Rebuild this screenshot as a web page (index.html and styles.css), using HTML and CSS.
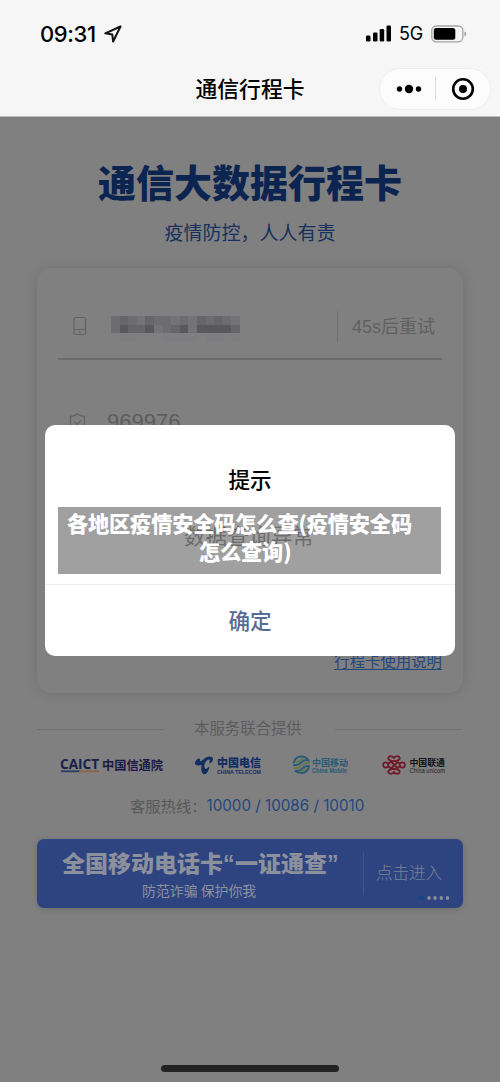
FILE: index.html
```html
<!DOCTYPE html>
<html lang="zh-CN">
<head>
<meta charset="utf-8">
<title>通信行程卡</title>
<link rel="stylesheet" href="styles.css">
</head>
<body>
<div class="phone">
  <header class="top">
    <div class="status">
      <span class="time">09:31</span>
      <svg class="loc" width="18" height="18" viewBox="0 0 18 18"><path d="M16.500 1.500 1.300 8.300l7 1.300.8 6.900z" fill="none" stroke="#111" stroke-width="2" stroke-linejoin="round"/></svg>
      <svg class="signal" width="26" height="17" viewBox="0 0 26 17"><rect x="0" y="10.500" width="4.500" height="6" rx="1.300"/><rect x="7" y="7.500" width="4.500" height="9" rx="1.300"/><rect x="13.700" y="4" width="4.500" height="12.500" rx="1.300"/><rect x="20.500" y="0.500" width="4.500" height="16" rx="1.300"/></svg>
      <span class="net">5G</span>
      <svg class="battery" width="36" height="18" viewBox="0 0 36 18"><rect x=".8" y="1" width="31" height="15.800" rx="4.500" fill="none" stroke="#a5a5a5" stroke-width="1.300"/><rect x="2.800" y="3" width="21.500" height="11.800" rx="2.500"/><path d="M33.400 6.500q2 .8 2 2.400t-2 2.400z" fill="#a5a5a5"/></svg>
    </div>
    <div class="nav">
      <h1 class="nav-title">通信行程卡</h1>
      <div class="capsule">
        <svg width="110" height="40" viewBox="0 0 110 40"><circle cx="19.500" cy="20" r="2.700"/><circle cx="29" cy="20" r="4.200"/><circle cx="38.500" cy="20" r="2.700"/><path d="M55.500 8v24" stroke="#dedede"/><circle cx="83" cy="20" r="9.800" fill="none" stroke="#000" stroke-width="2.600"/><circle cx="83" cy="20" r="4"/></svg>
      </div>
    </div>
  </header>
  <main class="page">
    <h2 class="title">通信大数据行程卡</h2>
    <p class="subtitle">疫情防控，人人有责</p>
    <section class="card">
      <div class="row phone-row">
        <svg class="ico-phone" width="14" height="20" viewBox="0 0 14 20"><rect x="1" y="1.500" width="11.500" height="17" rx="1.600" fill="none" stroke="#626265" stroke-width="1.200"/><path d="M1 13.500h11.500" stroke="#626265"/><circle cx="6.800" cy="16" r=".9" fill="#626265"/></svg>
        <svg class="mosaic" width="129" height="26" viewBox="0 0 15 3" preserveAspectRatio="none" shape-rendering="crispEdges">
          <path fill="#6d6d6f" d="M0 0h15v2H0z"/>
          <path fill="#666668" d="M1 0h1v1H1zM4 0h1v1H4zM10 0h1v1h-1zM12 0h1v1h-1zM2 1h2v1H2zM7 1h1v1H7zM14 1h1v1h-1z"/>
          <path fill="#747476" d="M3 0h1v1H3zM7 0h1v1H7zM9 0h1v2H9zM5 1h1v1H5zM14 0h1v1h-1z"/>
          <path fill="#59595b" d="M1 1h1v1H1zM4 1h1v1H4zM8 1h1v1H8zM10 1h4v1h-4z"/>
          <path fill="#7e7e80" d="M1 2h2v1H1zM6 2h4v1H6zM11 2h2v1h-2zM14 2h1v1h-1z"/>
        </svg>
        <span class="retry">45s后重试</span>
      </div>
      <div class="row code-row">
        <svg width="17" height="20" viewBox="0 0 17 20"><path d="M8.500 1q3 2.200 7 2.300V10q0 6-7 8.500Q1.500 16 1.500 10V3.300Q5.500 3.200 8.500 1z" fill="none" stroke="#626265" stroke-width="1.200"/><path d="m5.500 9 2.500 2.500 4-4" fill="none" stroke="#626265" stroke-width="1.200"/></svg>
        <span class="code">969976</span>
      </div>
      <a class="guide">行程卡使用说明</a>
    </section>
    <div class="provider"><span>本服务联合提供</span></div>
    <div class="logos">
      <svg width="104" height="24" viewBox="0 0 104 24"><text class="caict" x="0" y="15.800" textLength="39" lengthAdjust="spacingAndGlyphs">CAICT</text><path d="M1 18.300h19" stroke="#263d67" stroke-width="1.800"/><path d="M19 18.300h20" stroke="#8a654b" stroke-width="1.800"/><text class="cn navy" x="42" y="17" font-size="12.300" textLength="61" lengthAdjust="spacingAndGlyphs">中国信通院</text></svg>
      <svg width="68" height="24" viewBox="0 0 68 24"><g fill="#112e61"><path d="M.8 10.500C1.500 7.500 3 5.600 5 5.500c1.500 0 1.200 1.700.8 3 2.400-.8 4.600-3.400 7.200-4.600 2.400-1 5.600-.6 6 1.800.3 2.200-1.600 4.200-4.200 4.800 1-1.400 1.600-3.600.2-4-1.600-.3-3.600 2.200-4.400 4.600-.7 2.200-.2 4 1.200 5 1.300-.6 2.600-1.700 3.600-2.900-.3 3.600-2.200 7.600-4.600 8-2.700.2-4-3.200-3.400-7.600l.3-1.700C5.500 12.500 1.500 13 .8 10.500z"/></g><text class="cn telecom" x="23" y="14" font-size="11.300" textLength="44" lengthAdjust="spacingAndGlyphs">中国电信</text><text class="latin telecom" x="23" y="20.500" font-size="5" textLength="44" lengthAdjust="spacingAndGlyphs">CHINA TELECOM</text></svg>
      <svg width="60" height="24" viewBox="0 0 60 24"><g fill="none" stroke-width="2" stroke-linecap="round"><path d="M1.800 9.500C3 5.500 6 3.500 9.500 3.600c3 0 5.500 1.600 6.700 3.700-3-1-5 .2-7.200 2.200S4.500 12.500 2 12" stroke="#285b79"/><path d="M4 8.500c3 .8 4.500-2.600 8-3" stroke="#66794b" stroke-width="1.600"/><path d="M2.500 15.200c3 .6 5-.6 7.200-2.700s4.300-3 7.300-2.200" stroke="#66794b"/><path d="M3.500 18c3 .4 5.200-.7 7-2.600s3.800-2.700 6.500-2.200c-.4 3.800-3.500 6.800-7 6.900-2.300 0-4.500-.7-6.500-2.100" stroke="#285b79"/><path d="M8 18.700c3.500-.6 4-3 6.500-3.300" stroke="#66794b" stroke-width="1.500"/></g><text class="cn mobile" x="20" y="12.500" font-size="9" textLength="36" lengthAdjust="spacingAndGlyphs">中国移动</text><text class="latin mobile" x="20" y="19.500" font-size="6.500" textLength="35" lengthAdjust="spacingAndGlyphs">China Mobile</text></svg>
      <svg width="66" height="24" viewBox="0 0 66 24"><g fill="none" stroke="#701927" stroke-width="1.800" stroke-linejoin="round"><path d="M12 8.200C9.800 8 5.800 7.400 6.300 5 7 2.400 11 2.800 12 5.200c1-2.400 5-2.800 5.700-.2.500 2.400-3.500 3-5.700 3.200z"/><path d="M12 15.800c-2.200.2-6.200.8-5.700 3.200.7 2.600 4.700 2.200 5.700-.2 1 2.400 5 2.800 5.700.2.500-2.400-3.500-3-5.700-3.200z"/><circle cx="3.700" cy="12" r="2.600"/><circle cx="20.300" cy="12" r="2.600"/><path d="M6 11l3-2.500L15.500 15l2.500-2M6 13l3 2.500L15.500 9l2.500 2"/></g><text class="cn" x="27.500" y="12.500" font-size="8.900" textLength="35.500" lengthAdjust="spacingAndGlyphs" fill="#111">中国联通</text><text class="latin thin" x="27.500" y="19.500" font-size="6.500" textLength="35.500" lengthAdjust="spacingAndGlyphs" fill="#222">Ch<tspan fill="#701927">i</tspan>na un<tspan fill="#701927">i</tspan>com</text></svg>
    </div>
    <p class="hotline"><span>客服热线：</span><span class="numbers">10000 / 10086 / 10010</span></p>
    <section class="banner">
      <div class="banner-copy">
        <div class="banner-title">全国移动电话卡<span class="quote">“</span>一证通查<span class="quote">”</span></div>
        <div class="banner-sub">防范诈骗 保护你我</div>
      </div>
      <div class="enter">点击进入</div>
      <svg class="dots" width="32" height="6" viewBox="0 0 32 6"><path d="M0 3h6" stroke="#174580" stroke-width="3.500"/><g fill="#8b8f9b"><ellipse cx="11" cy="3" rx="1.700" ry="2.100"/><ellipse cx="17" cy="3" rx="1.700" ry="2.100"/><ellipse cx="23.300" cy="3" rx="1.700" ry="2.100"/><ellipse cx="29.500" cy="3" rx="1.700" ry="2.100"/></g></svg>
    </section>
  </main>
  <div class="modal">
    <h3 class="modal-title">提示</h3>
    <p class="modal-message">数据查询异常</p>
    <div class="caption"><span class="line-one">各地区疫情安全码怎么查(疫情安全码</span><span class="line-two">怎么查询)</span></div>
    <div class="confirm">确定</div>
  </div>
  <div class="home-bar"></div>
</div>
</body>
</html>
```
FILE: styles.css
```css
* { box-sizing: border-box; }
body { margin: 0; background: #808080; font-family: "Liberation Sans", "Noto Sans CJK SC", sans-serif; }
h1, h2, h3, p { margin: 0; }
svg { display: block; flex: none; }
.phone { position: relative; width: 500px; height: 1082px; overflow: hidden; background: #808080; }
.top { height: 117px; background: #f6f6f6; border-bottom: 1px solid #bcbcbc; color: #000; }
.status { height: 62px; padding: 5px 33px 0 40px; display: flex; align-items: center; }
.time { width: 64px; font: 500 22px Inter, sans-serif; letter-spacing: -.4px; white-space: nowrap; }
.loc { margin-right: auto; }
.net { width: 32px; margin-left: 7px; font: 400 18px Inter, sans-serif; letter-spacing: -.3px; }
.nav { height: 54px; padding-right: 10px; display: grid; grid-template-columns: 120px 1fr 110px; align-items: center; }
.nav-title { grid-column: 2; text-align: center; font: 500 21.800px/52px "Noto Sans CJK SC", sans-serif; margin-top: -2px; }
.capsule { width: 110px; height: 40px; border-radius: 20px; background: #fcfcfc; box-shadow: 0 0 0 1px #eeeeee; }
.page { padding: 39px 37px 0; }
.title { height: 52px; text-align: center; white-space: nowrap; color: #0b2550; font: 900 38px/50px "Noto Sans CJK SC", sans-serif; }
.subtitle { height: 60px; padding-top: 9px; text-align: center; color: #17305d; font: 400 19px/30px "Noto Sans CJK SC", sans-serif; }
.card { height: 425px; padding: 0 21px; border-radius: 15px; background: #808080; box-shadow: 0 0 14px rgba(0,0,0,.13); display: flex; flex-direction: column; }
.row { display: flex; align-items: center; }
.phone-row { height: 92px; padding: 26px 0 0 15px; border-bottom: 2px solid #6c6c6c; }
.mosaic { margin-left: 24px; margin-top: 5px; }
.retry { margin-left: auto; height: 31px; padding: 1px 7px 0 14px; border-left: 1px solid #707070; color: #606060; font-size: 18px; line-height: 31px; white-space: nowrap; }
.code-row { height: 92px; padding: 34px 0 0 11px; color: #5d5d5f; }
.code { margin-left: 21px; margin-top: -2px; font-size: 22px; }
.guide { margin-top: auto; margin-bottom: 21px; align-self: flex-end; color: #24477e; font: 400 15.400px/24px "Noto Sans CJK SC", sans-serif; text-decoration: underline; text-underline-offset: 2px; text-decoration-thickness: 1px; }
.provider { height: 70px; display: flex; align-items: center; gap: 30px; color: #5c5c60; font: 400 15.400px/20px "Noto Sans CJK SC", sans-serif; white-space: nowrap; }
.provider span { width: 111px; margin-top: -2px; }
.provider::before, .provider::after { content: ""; height: 1px; flex: none; width: 127px; background: #727272; margin-top: 2px; }
.logos { margin-top: -10px; height: 24px; padding: 0 15px 0 23px; display: flex; justify-content: space-between; }
.caict { font: 700 15px "Open Sans", sans-serif; fill: #17214b; }
.cn { font-family: "Noto Sans CJK SC", sans-serif; font-weight: 700; }
.latin { font-family: "Liberation Sans", sans-serif; font-weight: 700; }
.latin.thin { font-weight: 400; }
.navy { fill: #1b1a46; }
.telecom { fill: #112e61; }
.telecom.cn { font-weight: 900; }
.mobile { fill: #285b79; }
.hotline { margin-top: 16px; height: 25px; display: flex; padding-left: 93px; font: 400 15.300px/24px "Noto Sans CJK SC", sans-serif; color: #58585b; white-space: nowrap; }
.numbers { color: #24477e; font: 400 15.200px/26px Inter, sans-serif; }
.banner { position: relative; margin-top: 21px; height: 69px; border-radius: 7px; background: #2e4481; box-shadow: 0 1px 6px rgba(0,0,0,.16); display: flex; align-items: center; color: #8c909d; }
.banner-copy { width: 326px; height: 69px; }
.banner-title { padding-left: 25px; padding-top: 7px; height: 40px; font: 900 23px/32px "Noto Sans CJK SC", sans-serif; white-space: nowrap; }
.quote { font-family: "Liberation Sans", sans-serif; display: inline-block; width: 12px; }
.banner-sub { padding-left: 105px; font: 400 13.900px/22px "Noto Sans CJK SC", sans-serif; white-space: nowrap; }
.enter { height: 43px; padding-left: 12px; border-left: 1px solid #415387; color: #77809b; font: 300 16.500px/41px "Noto Sans CJK SC", sans-serif; }
.dots { position: absolute; right: 13px; bottom: 7px; }
.modal { position: absolute; left: 45px; top: 425px; width: 410px; height: 231px; border-radius: 10px; background: #fff; text-align: center; }
.modal-title { padding-top: 37px; height: 91px; font: 500 21.600px/34px "Noto Sans CJK SC", sans-serif; color: #000; }
.modal-message { height: 69px; padding-right: 2px; color: #303030; font: 400 21.700px/38px "Noto Sans CJK SC", sans-serif; border-bottom: 1px solid #eee; }
.caption { position: absolute; left: 13px; top: 82px; width: 383px; height: 67px; padding: 2px 0 0 9px; background: rgba(128,128,128,.75); color: #fff; font: 900 21.200px/28px "Noto Sans CJK SC", sans-serif; letter-spacing: -.150px; text-align: left; white-space: nowrap; display: flex; flex-direction: column; }
.line-two { padding-left: 132px; }
.confirm { height: 71px; color: #576b95; font: 500 21.600px/70px "Noto Sans CJK SC", sans-serif; }
.home-bar { position: absolute; left: 161px; top: 1065px; width: 178px; height: 7px; border-radius: 4px; background: #222; }
```
